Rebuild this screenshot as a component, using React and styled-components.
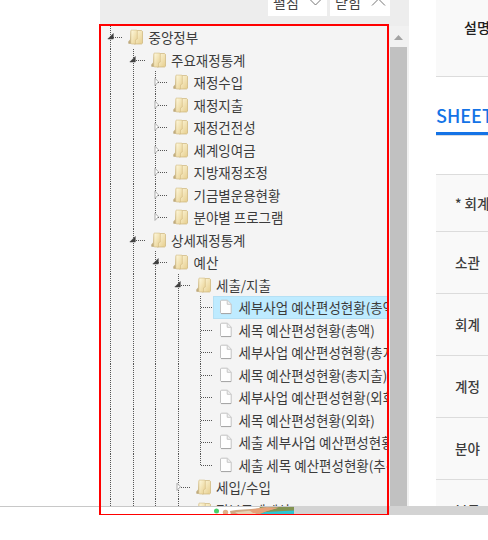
import React from "react";
import styled, { createGlobalStyle, css } from "styled-components";

const Global = createGlobalStyle`
  * { box-sizing: border-box; }
  body { margin: 0; background: #fff; font-family: "Noto Sans CJK KR", "Noto Sans", sans-serif; overflow: hidden; }
  svg { display: block; flex: none; }
`;

const Page = styled.div`
  position: relative;
  width: 488px;
  height: 540px;
  overflow: hidden;
`;

const Columns = styled.div`
  display: flex;
  height: 506px;
  padding-left: 100px;
  overflow: hidden;
`;

const Sidebar = styled.aside`
  display: flex;
  flex-direction: column;
  width: 309px;
  flex: none;
  background: #ededed;
`;

const Toolbar = styled.div`
  display: flex;
  justify-content: flex-end;
  align-items: flex-start;
  gap: 3px;
  height: 26px;
  flex: none;
  padding-right: 19px;
`;

const ToolButton = styled.button`
  display: flex;
  align-items: center;
  justify-content: space-between;
  width: ${(p) => p.$width}px;
  height: 30px;
  margin-top: -14px;
  padding: 2px 4px 0 5px;
  border: 0;
  background: #fff;
  color: #444;
  font: 14px/28px "Noto Sans CJK KR", sans-serif;
`;

const TreePane = styled.div`
  display: flex;
  flex: 1;
  min-height: 0;
`;

const Tree = styled.ul`
  width: 289px;
  height: 480px;
  margin: 0;
  padding: 0 0 0 0.4px;
  list-style: none;
  overflow: hidden;
  background: #f4f4f4;
`;

const TreeRow = styled.li`
  display: flex;
  height: 22.5px;
`;

const dotsDown = "repeating-linear-gradient(to bottom, #555 0 1px, transparent 1px 2px)";
const dotsAcross = "repeating-linear-gradient(to right, #555 0 1px, transparent 1px 2px)";

const Guide = styled.span`
  display: flex;
  align-items: center;
  flex: none;
  width: 22.5px;
  height: 22.5px;
  padding-left: 6.6px;
  background-repeat: no-repeat;
  background-image: ${dotsDown}${(p) => p.$elbow && css`, ${dotsAcross}`};
  background-position: 10px 0, 11px 11px;
  background-size: 1px ${(p) => (p.$half ? "12px" : "100%")}, 12px 1px;
`;

const Label = styled.span`
  display: flex;
  align-items: center;
  flex: 1;
  min-width: 0;
  gap: 4.3px;
  padding-left: 5.3px;
  white-space: nowrap;
  overflow: hidden;
  font-size: 13.5px;
  line-height: 22px;
  color: #3c3c3c;
  ${(p) => p.$selected && css`
    background: #beebff;
    box-shadow: inset 0 0 0 1px #b5e0f4;
  `}
`;

const Scrollbar = styled.div`
  display: flex;
  flex-direction: column;
  align-items: center;
  width: 20px;
  padding: 9px 2px 0 0;
  background: #f1f1f1;
`;

const Thumb = styled.div`
  flex: 1;
  width: 17px;
  margin-top: 7px;
  background: #c1c1c1;
`;

const Content = styled.main`
  width: 52px;
  margin-left: 27px;
  overflow: hidden;
  white-space: nowrap;
`;

const Description = styled.div`
  height: 77px;
  padding: 17px 0 0 28px;
  background: #f9f9f9;
  border-bottom: 1px solid #dcdcdc;
  color: #222;
  font-size: 14px;
  line-height: 21px;
  font-weight: 500;
`;

const SheetTab = styled.div`
  height: 58px;
  padding-top: 25px;
  border-bottom: 3px solid #1473e6;
  box-shadow: 0 1px #d7dce2;
  color: #1473e6;
  font-size: 18px;
  line-height: 27px;
  font-weight: 500;
`;

const Filters = styled.div`
  margin-top: 39px;
  border-top: 1px solid #dcdcdc;
  background: #f9f9f9;
`;

const Filter = styled.div`
  height: ${(p) => p.$height}px;
  padding-left: 19px;
  border-bottom: 1px solid #dcdcdc;
  color: #3c3c3c;
  font-size: 13.5px;
  font-weight: 500;
  line-height: ${(p) => p.$height - (p.$height > 60 ? 2 : 0)}px;
`;

const Footer = styled.footer`
  display: flex;
  justify-content: space-between;
  width: 488px;
  height: 9px;
`;

const FooterBlank = styled.div`
  width: 213px;
  border-top: 1px solid #c8c8c8;
`;

const FooterBar = styled.div`
  width: 194px;
  background: #d3d3d3;
`;

const Highlight = styled.div`
  position: absolute;
  left: 99px;
  top: 24px;
  width: 290px;
  height: 491px;
  border: 2px solid #f00;
  border-bottom-width: 1px;
  pointer-events: none;
`;

const rows = [
  [0, "중앙정부", "open"],
  [1, "주요재정통계", "open"],
  [2, "재정수입", "closed"],
  [2, "재정지출", "closed"],
  [2, "재정건전성", "closed"],
  [2, "세계잉여금", "closed"],
  [2, "지방재정조정", "closed"],
  [2, "기금별운용현황", "closed"],
  [2, "분야별 프로그램", "closed", "last"],
  [1, "상세재정통계", "open"],
  [2, "예산", "open"],
  [3, "세출/지출", "open"],
  [4, "세부사업 예산편성현황(총액)", "file", "selected"],
  [4, "세목 예산편성현황(총액)", "file"],
  [4, "세부사업 예산편성현황(총지출)", "file"],
  [4, "세목 예산편성현황(총지출)", "file"],
  [4, "세부사업 예산편성현황(외화)", "file"],
  [4, "세목 예산편성현황(외화)", "file"],
  [4, "세출 세부사업 예산편성현황(추경)", "file"],
  [4, "세출 세목 예산편성현황(추경)", "file", "last"],
  [3, "세입/수입", "closed"],
  [3, "정부통계예산", "closed"],
];

function Folder() {
  return (
    <svg width="16" height="16" viewBox="0 0 16 16">
      <defs>
        <linearGradient id="front" x1="0" y1="0" x2="1" y2="1">
          <stop stopColor="#fffae0" />
          <stop offset="1" stopColor="#e6cd8c" />
        </linearGradient>
        <linearGradient id="side" x1="0" y1="0" x2="0" y2="1">
          <stop stopColor="#f4ecd2" />
          <stop offset="1" stopColor="#b9a373" />
        </linearGradient>
      </defs>
      <path d="M.3 14.6V12.6l1.7-2V2L5 1v13.8H1z" fill="url(#side)" />
      <path d="M7 1.5h6.6l.9.9v11.8l-1 .8H6z" fill="url(#front)" stroke="#cdb47a" strokeWidth=".7" />
      <path d="M3 1.1h5.4l.9.8v8l-1.8 1v4.1H3.7l-.9-.8z" fill="url(#front)" stroke="#d2bb83" strokeWidth=".6" />
    </svg>
  );
}

function File() {
  return (
    <svg width="16" height="16" viewBox="0 0 16 16">
      <path d="M3.2 1.2h6.3l3.7 3.9v9.4H3.2l-.7-.7V1.9z" fill="#fefefe" stroke="#c2c2c2" />
      <path d="M9.2 1.5v3.8h3.8" fill="#f0f0f0" stroke="#c8c8c8" />
      <path d="M3 14.6h10" stroke="#a5a5a5" />
    </svg>
  );
}

function Toggle({ kind }) {
  return (
    <svg width="10" height="10" viewBox="0 0 10 10">
      {kind === "open" ? (
        <path d="M6.3 1.5V7H.8z" fill="#404040" stroke="#404040" strokeWidth=".5" />
      ) : (
        <path d="M3 1.2v7.2L6.4 4.8z" fill="#fff" stroke="#aaa" />
      )}
    </svg>
  );
}

function Chevron({ up }) {
  return (
    <svg width="15" height="8" viewBox="0 0 15 8">
      <path d={up ? "M1 7.5 7.5 1 14 7.5" : "M1 .5 7.5 7 14 .5"} fill="none" stroke="#777" />
    </svg>
  );
}

function Banner() {
  return (
    <svg width="81" height="9" viewBox="0 0 81 9">
      <path d="M0 .5h81" stroke="#c8c8c8" />
      <circle cx="3.5" cy="5" r="2.5" fill="#48d06b" />
      <circle cx="12.5" cy="6.5" r="2.7" fill="#dfb18a" />
      <path d="M47 1h34v8H42z" fill="#829351" />
      <path d="M52 6 81 4.5V9H44z" fill="#2ec5d4" />
      <path d="M17 5 23 4l15-1 16-2 12 .7-12 3-9 4.3H18z" fill="#cfaa85" />
      <path d="M22 6.2 39 4.4l7 1L40 9H27z" fill="#e6d3b5" />
      <path d="m36 4 15-2.5 14 .3-17 5.2h-8z" fill="#e6a078" />
    </svg>
  );
}

function TreeItem({ row: [depth, text, kind, flag] }) {
  return (
    <TreeRow>
      {Array.from({ length: depth }, (_, i) => <Guide key={i} />)}
      <Guide $elbow $half={flag === "last"}>
        {kind !== "file" && <Toggle kind={kind} />}
      </Guide>
      <Label $selected={flag === "selected"}>
        {kind === "file" ? <File /> : <Folder />}
        {text}
      </Label>
    </TreeRow>
  );
}

export default function App() {
  return (
    <Page>
      <Global />
      <Columns>
        <Sidebar>
          <Toolbar>
            <ToolButton $width={59}>펼침<Chevron /></ToolButton>
            <ToolButton $width={60}>닫힘<Chevron up /></ToolButton>
          </Toolbar>
          <TreePane>
            <Tree>{rows.map((row, i) => <TreeItem key={i} row={row} />)}</Tree>
            <Scrollbar>
              <svg width="9" height="5" viewBox="0 0 9 5"><path d="M0 5 4.5 0 9 5z" fill="#a3a3a3" /></svg>
              <Thumb />
            </Scrollbar>
          </TreePane>
        </Sidebar>
        <Content>
          <Description>설명</Description>
          <SheetTab>SHEET</SheetTab>
          <Filters>
            <Filter $height={57}>* 회계연도</Filter>
            <Filter $height={62}>소관</Filter>
            <Filter $height={62}>회계</Filter>
            <Filter $height={62}>계정</Filter>
            <Filter $height={62}>분야</Filter>
            <Filter $height={62}>부문</Filter>
          </Filters>
        </Content>
      </Columns>
      <Footer>
        <FooterBlank />
        <Banner />
        <FooterBar />
      </Footer>
      <Highlight />
    </Page>
  );
}
